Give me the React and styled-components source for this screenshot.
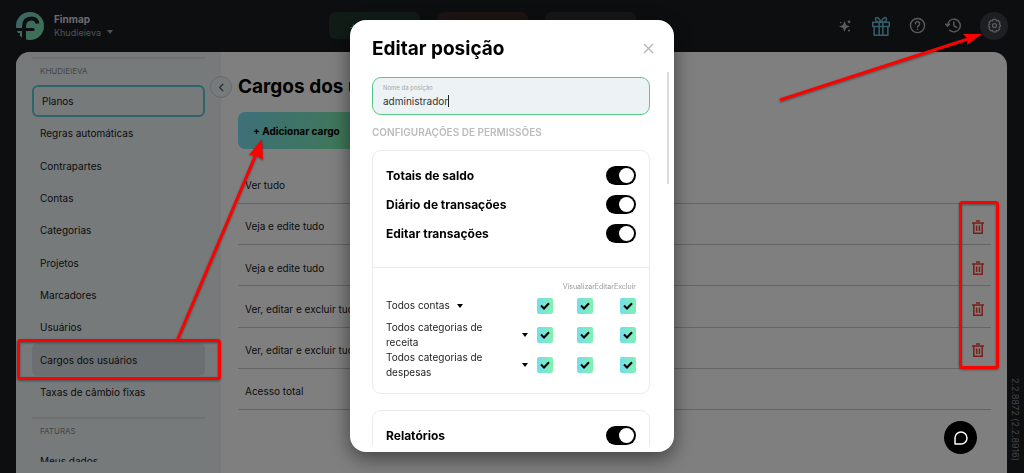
import React from "react";
import styled, { createGlobalStyle } from "styled-components";

const Global = createGlobalStyle`
  *, *::before, *::after { box-sizing: border-box; }
  html, body, #root { height: 100%; }
  body {
    margin: 0;
    overflow: hidden;
    background: #1a1c20;
    color: #16181b;
    font-family: Inter, "Liberation Sans", sans-serif;
    font-size: 10px;
  }
  button, input { font: inherit; color: inherit; }
  button { border: 0; padding: 0; background: none; cursor: pointer; }
`;

const Page = styled.div`
  display: flex;
  flex-direction: column;
  height: 100vh;
`;

/* ---------- top bar ---------- */

const TopBar = styled.header`
  display: flex;
  align-items: center;
  justify-content: space-between;
  height: 52px;
  flex: none;
  padding: 0 16px 1px;
`;

const Brand = styled.div`
  display: flex;
  align-items: center;
  gap: 10px;
  flex: 1;
`;

const Company = styled.div`
  display: flex;
  flex-direction: column;
`;

const CompanyName = styled.strong`
  font-size: 10px;
  line-height: 13px;
  font-weight: 700;
  color: #d8d9da;
`;

const CompanyButton = styled.button`
  display: flex;
  align-items: center;
  gap: 6px;
  line-height: 13px;
  font-size: 9px;
  color: #a2a5a8;
`;

const QuickActions = styled.div`
  display: flex;
  gap: 17px;
  margin-right: 59px;
  flex: none;
`;

const tones = { income: "#22372e", expense: "#3a2926", transfer: "#2a2f32" };

const QuickAction = styled.button`
  width: 91px;
  height: 27px;
  border-radius: 7px;
  padding-left: 20px;
  text-align: left;
  font-size: 13px;
  color: #6fdca6;
  background: ${(p) => tones[p.$tone]};
`;

const Tools = styled.nav`
  display: flex;
  align-items: center;
  justify-content: flex-end;
  flex: 1;
  gap: 8px;
`;

const ToolButton = styled.button`
  display: grid;
  place-items: center;
  width: 28px;
  height: 28px;
  border-radius: 50%;
  color: ${(p) => p.$color || "#b4b7ba"};
  background: ${(p) => (p.$active ? "#3b3f44" : "transparent")};
  margin-left: ${(p) => (p.$active ? "5px" : "0")};
`;

/* ---------- workspace ---------- */

const Workspace = styled.div`
  display: flex;
  flex: 1;
  min-height: 0;
`;

const Panel = styled.div`
  display: flex;
  flex: 1;
  min-width: 0;
  margin-left: 16px;
  background: #fff;
  border-radius: 14px 14px 0 0;
`;

const VersionRail = styled.div`
  display: flex;
  width: 17px;
  flex: none;
  align-items: center;
  justify-content: flex-end;
  padding-bottom: 12px;
  writing-mode: vertical-rl;
  font-size: 9px;
  color: #85888c;
`;

const Sidebar = styled.aside`
  position: relative;
  width: 205px;
  flex: none;
  padding: 5px 16px 11px;
  background: #eef4f6;
  border-radius: 14px 0 0 0;
`;

const MenuScroll = styled.div`
  height: 100%;
  overflow: hidden;
`;

const MenuSection = styled.section`
  border-top: 2px solid #dbe1e3;
`;

const MenuHeading = styled.h2`
  margin: 0;
  padding: 6px 8px 8px;
  font-size: 8px;
  line-height: 12px;
  font-weight: 400;
  color: #8a8e92;
`;

const MenuList = styled.nav`
  display: grid;
  grid-auto-rows: 1fr;
  height: ${(p) => p.$height};
  margin-bottom: 9px;
`;

const MenuLink = styled.a`
  display: flex;
  align-items: center;
  padding: 0 8px;
  border: 2px solid ${(p) => (p.$outlined ? "#5fc9d8" : "transparent")};
  border-width: ${(p) => (p.$outlined ? "2px" : "0")};
  border-radius: 6px;
  background: ${(p) => (p.$selected ? "#d8dee2" : "transparent")};
  color: inherit;
  text-decoration: none;
`;

const CollapseButton = styled.button`
  position: absolute;
  top: 24px;
  right: -11px;
  display: grid;
  place-items: center;
  width: 22px;
  height: 22px;
  border-radius: 50%;
  border: 1px solid #cfd6da;
  background: #eef4f6;
  color: #555a60;
`;

const Main = styled.main`
  flex: 1;
  min-width: 0;
  padding: 23px 16px 0 17px;
`;

const Title = styled.h1`
  margin: 0 0 13px;
  font-size: 19px;
  line-height: 24px;
  font-weight: 700;
  color: #000;
  white-space: nowrap;
`;

const AddButton = styled.button`
  display: block;
  height: 37px;
  padding: 0 15px;
  border-radius: 7px;
  font-weight: 700;
  color: #000;
  background: linear-gradient(100deg, #7ce0f4, #7ff0a9);
`;

const RolesTable = styled.table`
  width: 100%;
  height: 248px;
  margin-top: 13px;
  border-collapse: collapse;
`;

const RoleRow = styled.tr`
  height: 41px;
  border-bottom: 1px solid #c8cacc;
`;

const RoleCell = styled.td`
  padding: 5px 7px 0;
  text-align: ${(p) => (p.$end ? "right" : "left")};
`;

const DeleteButton = styled.button`
  display: inline-grid;
  color: #f0402e;
  vertical-align: middle;
`;

/* ---------- dialog ---------- */

const Overlay = styled.div`
  position: fixed;
  inset: 0;
  display: flex;
  justify-content: center;
  align-items: flex-start;
  padding-top: 20px;
  background: rgba(0, 0, 0, 0.5);
`;

const Dialog = styled.div`
  display: flex;
  flex-direction: column;
  width: 324px;
  height: calc(100vh - 41px);
  padding-bottom: 6px;
  border-radius: 16px;
  background: #fff;
  box-shadow: 0 6px 20px rgba(0, 0, 0, 0.5);
`;

const DialogHeader = styled.div`
  display: flex;
  justify-content: space-between;
  align-items: center;
  height: 52px;
  flex: none;
  padding: 5px 20px 0 22px;
`;

const DialogTitle = styled.h2`
  margin: 0;
  font-size: 19px;
  line-height: 25px;
  font-weight: 700;
  color: #000;
`;

const CloseButton = styled.button`
  display: grid;
  color: #b3b3b3;
`;

const DialogBody = styled.div`
  position: relative;
  flex: 1;
  min-height: 0;
  overflow: hidden;
  padding: 5px 24px 0 22px;
`;

const ScrollThumb = styled.div`
  position: absolute;
  top: 0;
  right: 5px;
  width: 2px;
  height: 112px;
  background: #dcdcdc;
`;

const Field = styled.label`
  display: flex;
  flex-direction: column;
  justify-content: center;
  height: 38px;
  padding: 0 10px;
  border: 1px solid #55c888;
  border-radius: 9px;
  background: #edf2f4;
`;

const FieldLabel = styled.span`
  font-size: 6px;
  line-height: 9px;
  color: #a3a7aa;
`;

const FieldLine = styled.span`
  display: flex;
  align-items: center;
  height: 18px;
`;

const FieldInput = styled.input`
  field-sizing: content;
  padding: 0;
  border: 0;
  outline: 0;
  background: none;
  color: #303436;
`;

const Caret = styled.span`
  width: 1px;
  height: 12px;
  background: #222;
`;

const GroupTitle = styled.h3`
  margin: 11px 0;
  font-size: 10px;
  line-height: 13px;
  font-weight: 600;
  color: #b9bbbd;
`;

const Card = styled.section`
  margin-bottom: 16px;
  border: 1px solid #e9eaec;
  border-radius: 9px;
`;

const SwitchList = styled.div`
  display: flex;
  flex-direction: column;
  gap: 9px;
  padding: 14px 13px 24px;
`;

const SwitchRow = styled.label`
  display: flex;
  justify-content: space-between;
  align-items: center;
  height: 20px;
  font-size: 12px;
  font-weight: 700;
  color: #000;
`;

const Switch = styled.input.attrs({ type: "checkbox", role: "switch" })`
  appearance: none;
  display: flex;
  align-items: center;
  width: 30px;
  height: 19px;
  margin: 0;
  padding: 2px;
  border-radius: 10px;
  background: #000;
  &::before {
    content: "";
    width: 15px;
    height: 15px;
    border-radius: 50%;
    background: #fff;
  }
  &:checked { justify-content: flex-end; }
  &:not(:checked) { background: #b9bbbd; }
`;

const AccessTable = styled.table`
  display: block;
  padding: 14px 13px 13px;
  border-top: 1px solid #e9eaec;
  thead, tbody { display: block; }
`;

const AccessHead = styled.tr`
  display: flex;
  justify-content: flex-end;
  height: 9px;
`;

const AccessHeading = styled.th`
  padding: 0;
  font-size: 7px;
  line-height: 10px;
  font-weight: 400;
  color: #96999c;
`;

const AccessRow = styled.tr`
  display: grid;
  grid-template-columns: 1fr 24px 40px 43px;
  align-items: center;
  min-height: 29px;
`;

const AccessName = styled.th`
  display: flex;
  align-items: center;
  justify-content: ${(p) => (p.$wrap ? "space-between" : "flex-start")};
  gap: 7px;
  padding: 0 1px 0 0;
  line-height: 15px;
  font-weight: 400;
  text-align: left;
  color: #222;
`;

const AccessText = styled.span`
  max-width: 110px;
`;

const ExpandButton = styled.button`
  display: grid;
  flex: none;
  color: #000;
`;

const AccessCell = styled.td`
  display: grid;
  justify-content: end;
  padding: 0;
`;

const CheckWrap = styled.span`
  display: grid;
  place-items: center;
  & > * { grid-area: 1 / 1; }
  & > svg { pointer-events: none; }
`;

const Check = styled.input.attrs({ type: "checkbox" })`
  appearance: none;
  width: 16px;
  height: 16px;
  margin: 0;
  border-radius: 2px;
  background: linear-gradient(90deg, #74dcec, #80f3b0);
`;

/* ---------- floating layer ---------- */

const ChatButton = styled.button`
  position: fixed;
  right: 47px;
  bottom: 19px;
  display: grid;
  place-items: center;
  width: 33px;
  height: 33px;
  border-radius: 50%;
  background: #000;
  color: #fff;
`;

const Annotations = styled.svg`
  position: fixed;
  top: 0;
  left: 0;
  pointer-events: none;
  filter: drop-shadow(0 1px 1px rgba(0, 0, 0, 0.4));
`;

/* ---------- icons ---------- */

const Stroke = ({ size, width = 1.8, children }) => (
  <svg width={size} height={size} viewBox="0 0 24 24" fill="none" stroke="currentColor"
    strokeWidth={width} strokeLinecap="round" strokeLinejoin="round" aria-hidden="true">
    {children}
  </svg>
);

const Logo = () => (
  <svg width="28" height="28" viewBox="0 0 28 28" aria-hidden="true">
    <defs>
      <linearGradient id="logo" x1="0" y1="0" x2="1" y2="1">
        <stop offset="0" stopColor="#7cc8d0" />
        <stop offset="1" stopColor="#79e6a2" />
      </linearGradient>
    </defs>
    <circle cx="14" cy="14" r="14" fill="url(#logo)" />
    <path d="M8 28V14.500C8 9 11 6.500 15.500 6.500C19 6.500 21 8.500 21.500 11.500" fill="none" stroke="#1a1c20" strokeWidth="4" />
    <path d="M0 17.500H17" fill="none" stroke="#1a1c20" strokeWidth="3.200" strokeLinecap="round" />
    <path d="M1 22H4" fill="none" stroke="#1a1c20" strokeWidth="2" />
  </svg>
);

const Triangle = ({ size = 6 }) => (
  <svg width={size} height={size - 2} viewBox="0 0 6 4" aria-hidden="true">
    <path d="M0 0h6L3 4z" fill="currentColor" />
  </svg>
);

const Sparkle = () => (
  <svg width="12" height="12" viewBox="0 0 12 12" fill="currentColor" aria-hidden="true">
    <path d="M5.500 1L7.100 4.900L11 6.500L7.100 8.100L5.500 12L3.900 8.100L0 6.500L3.900 4.900z" />
    <circle cx="10" cy="1.800" r="1.400" />
    <circle cx="1.800" cy="2.500" r="0.800" />
    <circle cx="10" cy="10.500" r="1" />
  </svg>
);

const Gift = () => (
  <Stroke size={22} width={1.7}>
    <path d="M3 8h18v4.500H3zM4.500 12.500h15V22h-15zM10 8v14M14 8v14" />
    <path d="M12 8C9 8 6 7 6 4.500S9.500 1.500 12 8C14.500 1.500 18 2 18 4.500S15 8 12 8z" />
  </Stroke>
);

const Help = () => (
  <Stroke size={17} width={2}>
    <circle cx="12" cy="12" r="10" />
    <path d="M9 9.500a3 3 0 1 1 4.500 2.600c-1 .6-1.500 1-1.500 2.200M12 17.300v.2" />
  </Stroke>
);

const History = () => (
  <Stroke size={17} width={2}>
    <path d="M3.500 12a9 9 0 1 1 3 6.700M1 10l2.600 3L6.500 10M12.500 7v5.500l4 2.200" />
  </Stroke>
);

const Gear = () => (
  <Stroke size={15} width={2}>
    <path d="M9.500 2h5l.7 2.800 2.600-.8 3 3.600-1.300 2.400 2 1.200v2l-2 1.400 1 2.400-3 3.500-2.500-.9-.5 2.400h-5l-.8-2.400-2.500.9-3-3.500 1.200-2.400-2-1.400v-2l2-1.200-1.200-2.400 3-3.600 2.600.8z" />
    <circle cx="12" cy="12" r="3.200" />
  </Stroke>
);

const Trash = () => (
  <svg width="12" height="14" viewBox="0 0 12 14" fill="none" stroke="currentColor" strokeWidth="1.500" aria-hidden="true">
    <path d="M0 3h12M4 1h4M1.800 3v10.200h8.400V3M4.600 5.500v5.500M7.400 5.500v5.500" />
  </svg>
);

const Cross = () => (
  <svg width="11" height="11" viewBox="0 0 11 11" stroke="currentColor" strokeWidth="1.200" aria-hidden="true">
    <path d="M1 1l9 9M10 1l-9 9" />
  </svg>
);

const Tick = () => (
  <svg width="10" height="8" viewBox="0 0 10 8" fill="none" stroke="#000" strokeWidth="2" aria-hidden="true">
    <path d="M1 3.500L4 6.500L9 1.200" />
  </svg>
);

/* ---------- data ---------- */

const menu = [
  "Planos", "Regras automáticas", "Contrapartes", "Contas", "Categorias", "Projetos",
  "Marcadores", "Usuários", "Cargos dos usuários", "Taxas de câmbio fixas",
];

const roles = [
  { name: "Ver tudo" },
  { name: "Veja e edite tudo", removable: true },
  { name: "Veja e edite tudo", removable: true },
  { name: "Ver, editar e excluir tudo", removable: true },
  { name: "Ver, editar e excluir tudo", removable: true },
  { name: "Acesso total" },
];

const switches = ["Totais de saldo", "Diário de transações", "Editar transações"];
const actions = ["Visualizar", "Editar", "Excluir"];
const access = [
  { name: "Todos contas" },
  { name: "Todos categorias de receita", wrap: true },
  { name: "Todos categorias de despesas", wrap: true },
];

export default function App() {
  return (
    <>
      <Global />
      <Page>
        <TopBar>
          <Brand>
            <Logo />
            <Company>
              <CompanyName>Finmap</CompanyName>
              <CompanyButton>Khudieieva <Triangle /></CompanyButton>
            </Company>
          </Brand>
          <QuickActions>
            <QuickAction $tone="income">+</QuickAction>
            <QuickAction $tone="expense" aria-label="Despesa" />
            <QuickAction $tone="transfer" aria-label="Transferência" />
          </QuickActions>
          <Tools>
            <ToolButton aria-label="Novidades"><Sparkle /></ToolButton>
            <ToolButton aria-label="Presentes" $color="#68b8d2"><Gift /></ToolButton>
            <ToolButton aria-label="Ajuda"><Help /></ToolButton>
            <ToolButton aria-label="Histórico"><History /></ToolButton>
            <ToolButton aria-label="Configurações" $active><Gear /></ToolButton>
          </Tools>
        </TopBar>

        <Workspace>
          <Panel>
            <Sidebar>
              <MenuScroll>
                <MenuSection>
                  <MenuHeading>KHUDIEIEVA</MenuHeading>
                  <MenuList $height="323px">
                    {menu.map((item) => (
                      <MenuLink key={item} href="#" $outlined={item === "Planos"} $selected={item === "Cargos dos usuários"}>
                        {item}
                      </MenuLink>
                    ))}
                  </MenuList>
                </MenuSection>
                <MenuSection>
                  <MenuHeading>FATURAS</MenuHeading>
                  <MenuList $height="32px">
                    <MenuLink href="#">Meus dados</MenuLink>
                  </MenuList>
                </MenuSection>
              </MenuScroll>
              <CollapseButton aria-label="Recolher menu">
                <Stroke size={11} width={2.6}><path d="M15 5l-7 7 7 7" /></Stroke>
              </CollapseButton>
            </Sidebar>
            <Main>
              <Title>Cargos dos usuários</Title>
              <AddButton>+ Adicionar cargo</AddButton>
              <RolesTable>
                <tbody>
                  {roles.map((role, i) => (
                    <RoleRow key={i}>
                      <RoleCell>{role.name}</RoleCell>
                      <RoleCell $end>
                        {role.removable && <DeleteButton aria-label="Excluir cargo"><Trash /></DeleteButton>}
                      </RoleCell>
                    </RoleRow>
                  ))}
                </tbody>
              </RolesTable>
            </Main>
          </Panel>
          <VersionRail>2.2.8872 (2.2.8916)</VersionRail>
        </Workspace>
      </Page>

      <Overlay>
        <Dialog role="dialog" aria-labelledby="dialog-title">
          <DialogHeader>
            <DialogTitle id="dialog-title">Editar posição</DialogTitle>
            <CloseButton aria-label="Fechar"><Cross /></CloseButton>
          </DialogHeader>
          <DialogBody>
            <ScrollThumb />
            <Field>
              <FieldLabel>Nome da posição</FieldLabel>
              <FieldLine>
                <FieldInput defaultValue="administrador" />
                <Caret />
              </FieldLine>
            </Field>
            <GroupTitle>CONFIGURAÇÕES DE PERMISSÕES</GroupTitle>
            <Card>
              <SwitchList>
                {switches.map((name) => (
                  <SwitchRow key={name}>{name}<Switch defaultChecked /></SwitchRow>
                ))}
              </SwitchList>
              <AccessTable>
                <thead>
                  <AccessHead>
                    {actions.map((a) => <AccessHeading key={a} scope="col">{a}</AccessHeading>)}
                  </AccessHead>
                </thead>
                <tbody>
                  {access.map((row) => (
                    <AccessRow key={row.name}>
                      <AccessName scope="row" $wrap={row.wrap}>
                        <AccessText>{row.name}</AccessText>
                        <ExpandButton aria-label="Expandir"><Triangle /></ExpandButton>
                      </AccessName>
                      {actions.map((a) => (
                        <AccessCell key={a}>
                          <CheckWrap>
                            <Check defaultChecked aria-label={`${a}: ${row.name}`} />
                            <Tick />
                          </CheckWrap>
                        </AccessCell>
                      ))}
                    </AccessRow>
                  ))}
                </tbody>
              </AccessTable>
            </Card>
            <Card>
              <SwitchList>
                <SwitchRow>Relatórios<Switch defaultChecked /></SwitchRow>
              </SwitchList>
            </Card>
          </DialogBody>
        </Dialog>
      </Overlay>

      <ChatButton aria-label="Abrir chat">
        <Stroke size={16} width={2.2}>
          <path d="M3 21V12a9 9 0 1 1 9 9z" />
        </Stroke>
      </ChatButton>

      <Annotations width="1024" height="473" viewBox="0 0 1024 473" fill="none" stroke="#fe0000" strokeWidth="3" aria-hidden="true">
        <rect x="18.500" y="340.500" width="201" height="38" rx="2" />
        <rect x="960.500" y="202.500" width="37" height="165" rx="2" />
        <path d="M177 341L257 152M780 100L968 39" />
        <path d="M262 139L263 160L256 155L249 155z" fill="#fe0000" stroke="none" />
        <path d="M982 34L967 45L968 39L963 34z" fill="#fe0000" stroke="none" />
      </Annotations>
    </>
  );
}
